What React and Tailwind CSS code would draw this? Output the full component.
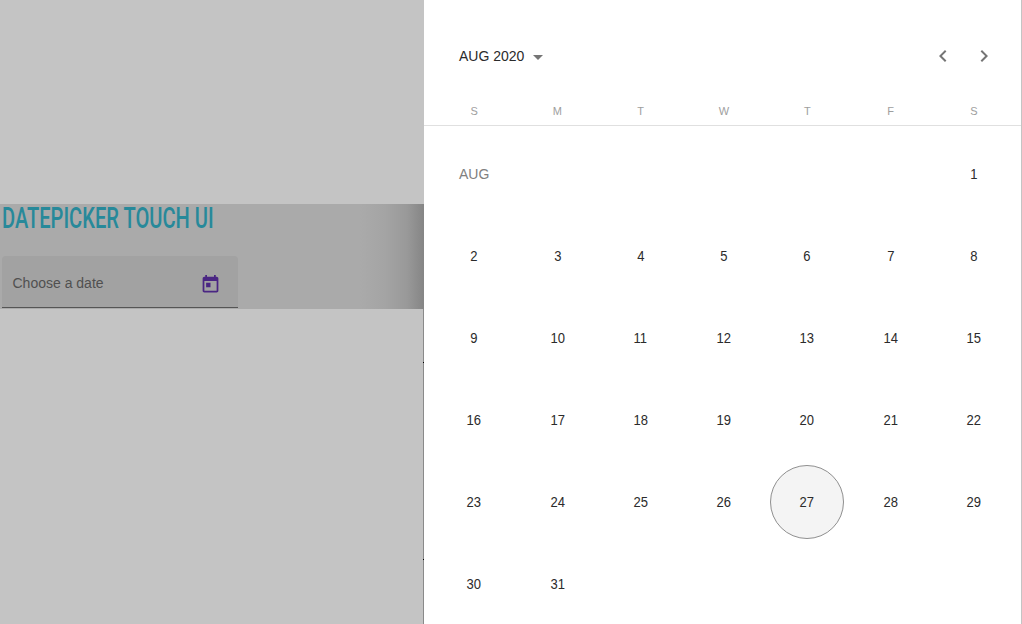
const weekdays = ["S", "M", "T", "W", "T", "F", "S"];
const days = Array.from({ length: 30 }, (_, i) => i + 2);
const TODAY = 27;

function Day({ day }) {
  return (
    <button className="flex h-[82px] items-center justify-center">
      <span
        className={
          day === TODAY
            ? "flex size-[74px] items-center justify-center rounded-full border border-[#8f8f8f] bg-[#f4f4f4]"
            : "flex size-[74px] items-center justify-center rounded-full"
        }
      >
        <span className="scale-x-[0.93] pt-px">{day}</span>
      </span>
    </button>
  );
}

function Backdrop() {
  return (
    <main className="flex w-[424px] shrink-0 flex-col bg-[#c4c4c4]">
      <div className="h-[204px]" />
      <section className="h-[105px] bg-[linear-gradient(to_right,#aaaaaa_0px,#aaaaaa_360px,#a4a4a4_385px,#999999_407px,#858585_424px)] pl-0.5">
        <h1 className="h-[52px] w-[215px] origin-left scale-x-[0.693] whitespace-nowrap font-['Roboto',sans-serif] text-[29px] leading-[28px] font-medium text-[#27899a]">
          DATEPICKER TOUCH UI
        </h1>
        <div className="flex h-[52px] w-[236px] items-center justify-between rounded-t border-b border-[#555555] bg-[#a2a2a2] pl-[10.5px] pr-[17px] pt-[3px]">
          <span className="text-[14px] text-[#505050]">Choose a date</span>
          <svg viewBox="0 0 24 24" className="mt-[3px] size-[21px] fill-[#4a2683]">
            <path d="M19 3h-1V1h-2v2H8V1H6v2H5c-1.11 0-1.99.9-1.99 2L3 19c0 1.1.89 2 2 2h14c1.1 0 2-.9 2-2V5c0-1.1-.9-2-2-2zm0 16H5V8h14v11zM7 10h5v5H7z" />
          </svg>
        </div>
      </section>
      <div className="flex flex-1 flex-col items-end">
        <div className="flex w-px flex-1 flex-col bg-[#8a8a8a]">
          <i className="mt-[53px] h-px bg-black" />
          <i className="mt-[196px] h-px bg-black" />
        </div>
      </div>
    </main>
  );
}

export default function App() {
  return (
    <div className="flex h-[624px] w-[1022px] overflow-hidden font-['Liberation_Sans',Arial,sans-serif]">
      <Backdrop />
      <section className="w-[598px] border-r border-[#c4c4c4] bg-white text-[14px] text-[#2b2b2b]">
        <header className="flex h-[98px] items-center justify-between pl-[35px] pr-[25px] pt-[14px]">
          <button className="flex items-center gap-[9px] text-[14px]">
            AUG 2020
            <svg viewBox="0 0 10 5" className="mt-[2px] h-[5px] w-[10px] fill-[#757575]">
              <path d="M0 0h10L5 5z" />
            </svg>
          </button>
          <div className="flex gap-[17px]">
            <svg viewBox="0 0 24 24" className="size-6 fill-[#757575]">
              <path d="M15.41 7.41 14 6l-6 6 6 6 1.41-1.41L10.83 12z" />
            </svg>
            <svg viewBox="0 0 24 24" className="size-6 fill-[#757575]">
              <path d="M10 6 8.59 7.41 13.17 12l-4.58 4.59L10 18l6-6z" />
            </svg>
          </div>
        </header>
        <div className="grid h-7 grid-cols-7 border-b border-[#e0e0e0] pl-[8.5px] pr-[5.5px] text-center text-[11px] leading-[26px] text-[#9e9e9e]">
          {weekdays.map((d, i) => (
            <span key={i}>{d}</span>
          ))}
        </div>
        <div className="grid grid-cols-7 pl-[8.5px] pr-[5.5px] pt-[7px]">
          <span className="col-span-6 flex h-[82px] items-center pl-[26.5px] text-[14px] text-[#808080]">AUG</span>
          <Day day={1} />
          {days.map((d) => (
            <Day key={d} day={d} />
          ))}
        </div>
      </section>
    </div>
  );
}
